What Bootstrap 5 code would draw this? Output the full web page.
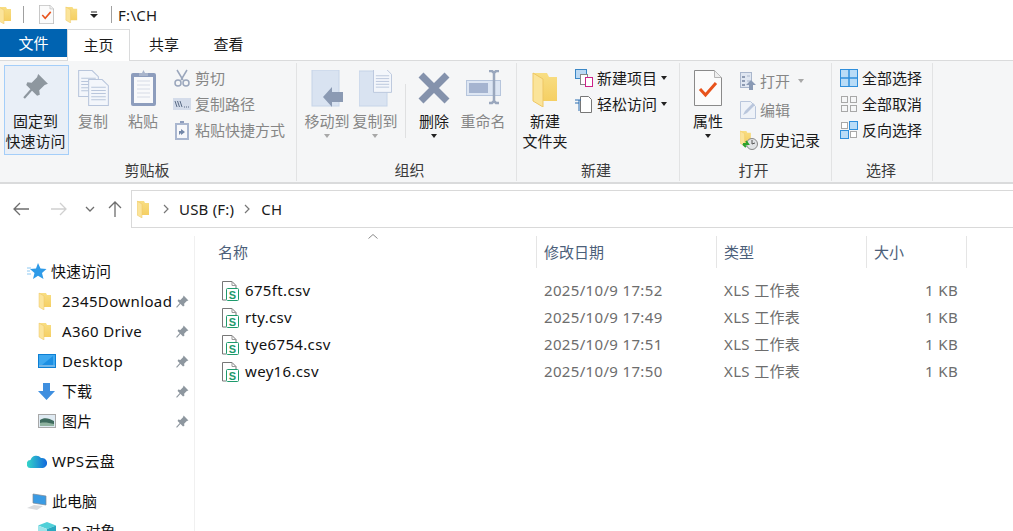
<!doctype html>
<html lang="zh"><head><meta charset="utf-8"><title>CH</title>
<link href="https://cdn.jsdelivr.net/npm/bootstrap@5.3.0/dist/css/bootstrap.min.css" rel="stylesheet">
<style>
html,body{height:531px;overflow:hidden;background:#fff}
body{font-family:"Noto Sans","Noto Sans CJK SC",sans-serif;font-size:15px;line-height:20px;color:#1a1a1a}
svg{display:block;flex:none}
.sk-title{height:29px}
.sk-sep{width:1px;height:17px;background:#a0a0a0}
.sk-path{letter-spacing:.3px;margin-left:-1px}
.sk-tabs{height:32px;border-bottom:1px solid #dadbdc}
.sk-tab{height:32px;width:65px;text-align:center;line-height:31px}
.sk-file{width:67px;height:28px;line-height:28px;background:#0063b1;color:#fff}
.sk-home{width:63px;border:1px solid #dadbdc;border-bottom:0;background:#fff;margin-bottom:-1px}
.sk-ribbon{height:123px;background:#f5f6f7;border-bottom:2px solid #dadbdc}
.sk-group{height:118px;border-right:1px solid #e2e3e4;margin-top:2px}
.sk-gbody{height:95px;margin-top:2px}
.sk-glabel{height:20px;text-align:center;color:#3b3b3b}
.sk-big{width:48px;padding-top:5px;text-align:center;white-space:nowrap}
.sk-big svg{margin:0 auto 5px}
.sk-big svg[height="37"]{margin-bottom:4px}
.sk-off{color:#868686}
.sk-pin{width:65px;height:90px;background:#e9eff7;border:1px solid #a4cef9;padding:4px 2px 0 0}
.sk-small{height:26px;white-space:nowrap}
.sk-tall{height:29.5px}
.sk-small svg{margin-right:4px}
.sk-vsep{width:1px;height:54px;background:#dfe0e1;margin:19px 4px 0 6px}
.sk-caret{width:0;height:0;border:3.5px solid transparent;border-top:4px solid #222;border-bottom:0}
.sk-caret-off{border-top-color:#a8a8a8}
.sk-addr{height:44px;padding-top:6px}
.sk-box{height:38px;flex:1;border:1px solid #d9d9d9;border-right:0;padding-left:5px}
.sk-crumb{letter-spacing:.2px}
.sk-nav{width:195px;height:303px;overflow:hidden;border-right:1px solid #f0f0f0;margin-top:8px;padding-top:20px}
.sk-tree{height:30px;white-space:nowrap;color:#111}
.sk-lv1{padding-left:26px}
.sk-lv2{padding-left:38px}
.sk-name{flex:1}
.sk-latin{letter-spacing:.38px}
.sk-gap{margin-top:10px}
.sk-np{width:13px;height:13px;margin-right:5px;color:#8e979f}
.sk-main{flex:1;padding:8px 0 0 15px}
.sk-cols{display:grid;grid-template-columns:327px 180px 150px 100px}
.sk-hd{height:32px;color:#4c607a;position:relative}
.sk-hd>div{padding-left:7px;border-right:1px solid #e5e5e5;line-height:32px}
.sk-hd>div:first-of-type{padding-left:8px}
.sk-sort{position:absolute;left:158px;top:-2px}
.sk-rows{margin-top:9px}
.sk-row{height:27px;line-height:27px;color:#6d6d6d;letter-spacing:.34px}
.sk-row>div{padding-left:7px;white-space:nowrap}
.sk-fn{color:#111;display:flex;align-items:center;padding-left:11px!important}
.sk-fn svg{margin-right:6px}
.sk-row>.sk-kb{text-align:right;padding-right:9px}
</style></head><body>
<svg width="0" height="0" style="position:absolute"><defs>
<linearGradient id="fg" x1="0" x2="0" y1="0" y2="1"><stop offset="0" stop-color="#f8de84"/><stop offset="1" stop-color="#f5cf63"/></linearGradient>
<symbol id="fold" viewBox="0 0 12 18"><path d="M0 1h7l1 2h4v12H3z" fill="url(#fg)"/><path d="M0 1l5 3v14l-5-3z" fill="#fbe49a" stroke="#eec765" stroke-width=".5"/></symbol>
<symbol id="pin" viewBox="0 0 24 24"><path d="M1 23l8-9" stroke="currentColor" stroke-width="2"/><path d="M14 1l9 9-3 1-5 5 .5 4-2.500 1L3 11l1-2.500 4 .5 5-5z" fill="currentColor"/></symbol>
<symbol id="doc" viewBox="0 0 28 36"><path d="M.5.500h20l7 7v28H.5z" fill="#fbfbfb" stroke="#8a8a8a"/><path d="M20.500.5v7h7" fill="#eee" stroke="#b5b5b5"/><path d="M6 19l5.500 6L22 13" fill="none" stroke="#e8531c" stroke-width="3"/></symbol>
<symbol id="csv" viewBox="0 0 18 20"><path d="M5 19H1.500V.5H11l4 4V7" fill="#fff" stroke="#777"/><path d="M11 .5v4h4" fill="none" stroke="#999"/><rect x="5.500" y="7.500" width="12" height="12" rx="1" fill="#fff" stroke="#1d9a6c"/><text x="11.500" y="17.500" text-anchor="middle" font-size="11" font-weight="700" font-family="Liberation Sans" fill="#1d9a6c">S</text></symbol>
<symbol id="docln" viewBox="0 0 20 26"><path d="M.5.500h13l6 6v19H.5z" fill="#f3f6fb" stroke="#b9c6dc"/><path d="M3 8h14M3 11h14M3 14h14M3 17h14M3 20h14" stroke="#b9c6dc"/></symbol>
</defs></svg>

<header class="sk-title d-flex align-items-center">
 <svg width="14" height="18" style="margin-left:-2px"><use href="#fold"/></svg>
 <div class="sk-sep" style="margin:0 15px 0 11px"></div>
 <svg width="15" height="19"><use href="#doc"/></svg>
 <svg width="13" height="17" style="margin-left:11px"><use href="#fold"/></svg>
 <svg width="8" height="8" style="margin-left:12px"><path d="M1 1h6" stroke="#222"/><path d="M0 3h8L4 7z" fill="#222"/></svg>
 <div class="sk-sep" style="margin:0 7px 0 13px"></div>
 <span class="sk-path">F:\CH</span>
</header>

<nav class="sk-tabs d-flex align-items-start">
 <div class="sk-tab sk-file">文件</div><div class="sk-tab sk-home">主页</div><div class="sk-tab" style="width:68px">共享</div><div class="sk-tab" style="width:61px">查看</div>
</nav>

<section class="sk-ribbon d-flex">
 <div class="sk-group" style="width:297px;padding:0 6px 0 4px">
  <div class="sk-gbody d-flex">
   <div class="sk-big sk-pin"><svg width="28" height="36" viewBox="0 0 28 36" style="margin-bottom:5px;color:#8e979f"><use href="#pin" x="1" y="3" width="26" height="26"/></svg>固定到<br>快速访问</div>
   <div class="sk-big sk-off"><svg width="31" height="36"><use href="#docln" x="0" y="0" width="21" height="27"/><use href="#docln" x="10" y="9" width="21" height="27"/></svg>复制</div>
   <div class="sk-big sk-off" style="width:52px"><svg width="27" height="37" viewBox="0 0 27 37"><rect x="1" y="3" width="25" height="33" rx="2" fill="#8d9dbd"/><rect x="4" y="7" width="19" height="26" fill="#f8f9fb"/><path d="M7 11h13M7 15h13M7 19h13M7 23h13M7 27h13" stroke="#d6dbe6"/><path d="M9 6V3h3l1.500-3L15 3h3v3z" fill="#a9b5cc"/></svg>粘贴</div>
   <div class="sk-off" style="margin-left:4px">
    <div class="sk-small d-flex align-items-center"><svg width="18" height="18" viewBox="0 0 18 18"><g fill="none" stroke="#9aa6bc" stroke-width="1.500"><path d="M4 1l6 10M14 1L8 11"/><circle cx="5" cy="14" r="3"/><circle cx="13" cy="14" r="3"/></g></svg>剪切</div>
    <div class="sk-small d-flex align-items-center"><svg width="18" height="12" viewBox="0 0 18 12"><rect width="18" height="12" fill="#d4dcea"/><path d="M2 3l2 6M4.500 3l2 6M7 3l2 6" stroke="#5a6b85"/><path d="M11 9h1M13 9h1M15 9h1" stroke="#5a6b85"/></svg>复制路径</div>
    <div class="sk-small d-flex align-items-center"><svg width="18" height="20" viewBox="0 0 18 20"><rect x="2" y="3" width="14" height="17" fill="#a9b6cf"/><rect x="4" y="5" width="10" height="13" fill="#f7f8fb"/><path d="M7 3V1h4v2z" fill="#8d9dbd"/><path d="M6 15V11h2V9l4 3-4 3v-2z" fill="#7387a8"/></svg>粘贴快捷方式</div>
   </div>
  </div>
  <div class="sk-glabel">剪贴板</div>
 </div>

 <div class="sk-group" style="width:220px;padding-left:6px">
  <div class="sk-gbody d-flex">
   <div class="sk-big sk-off"><svg width="33" height="37" viewBox="0 0 33 37"><rect x="1" width="27" height="36" fill="#d9e3f1" stroke="#c6d4e8"/><path d="M12 27l9-10v5h11v10H21v5z" fill="#8b9ab3"/></svg>移动到<div class="sk-caret sk-caret-off mx-auto" style="margin-top:3px"></div></div>
   <div class="sk-big sk-off"><svg width="33" height="37" viewBox="0 0 33 37"><rect x="0" y="1" width="28" height="35" fill="#d9e3f1" stroke="#c6d4e8"/><use href="#docln" x="14" y="-2" width="19" height="25"/></svg>复制到<div class="sk-caret sk-caret-off mx-auto" style="margin-top:3px"></div></div>
   <div class="sk-vsep"></div>
   <div class="sk-big"><svg width="32" height="37" viewBox="0 0 32 37"><path d="M3 5l26 26M29 5L3 31" stroke="#8492ac" stroke-width="7"/></svg>删除<div class="sk-caret mx-auto" style="margin-top:3px"></div></div>
   <div class="sk-big sk-off" style="width:50px"><svg width="36" height="37" viewBox="0 0 36 37"><rect x="1.500" y="10.500" width="34" height="15" fill="#dde6f3" stroke="#b6c5dc"/><rect x="4" y="13" width="19" height="10" fill="#a5b4d0"/><path d="M24 1h3l2 2 2-2h3M29 3v28M24 33h3l2-2 2 2h3" fill="none" stroke="#9aa7bd" stroke-width="2.500"/></svg>重命名</div>
  </div>
  <div class="sk-glabel">组织</div>
 </div>

 <div class="sk-group" style="width:163px;padding:0 10px 0 6px">
  <div class="sk-gbody d-flex">
   <div class="sk-big" style="width:46px;margin-left:-1px"><svg width="26" height="37" viewBox="0 -2 26 37"><use href="#fold" width="26" height="36" y="-1"/></svg>新建<br>文件夹</div>
   <div style="margin-left:7px">
    <div class="sk-small d-flex align-items-center"><svg width="18" height="18" viewBox="0 0 18 18"><rect x=".5" y=".5" width="11" height="9" fill="#bcd9f3" stroke="#3b87c6"/><rect x="5.500" y="5.500" width="7" height="10" fill="#fff" stroke="#888"/><rect x="10.500" y="8.500" width="7" height="9" fill="#fff" stroke="#c28"/></svg>新建项目<div class="sk-caret ms-1"></div></div>
    <div class="sk-small d-flex align-items-center"><svg width="18" height="18" viewBox="0 0 18 18"><path d="M5.500 1.500h8l3 3v13h-11z" fill="#fff" stroke="#777"/><path d="M0 5h6M0 8h4" stroke="#2b6fb3" stroke-width="1.200"/><path d="M4 5v11" stroke="#2b6fb3"/></svg>轻松访问<div class="sk-caret ms-1"></div></div>
   </div>
  </div>
  <div class="sk-glabel">新建</div>
 </div>

 <div class="sk-group" style="width:152px;padding:0 10px 0 6px">
  <div class="sk-gbody d-flex">
   <div class="sk-big" style="width:44px"><svg width="28" height="36"><use href="#doc"/></svg>属性<div class="sk-caret mx-auto" style="margin-top:3px"></div></div>
   <div style="margin-left:10px;padding-top:1px">
    <div class="sk-small sk-tall d-flex align-items-center sk-off"><svg width="16" height="18" viewBox="0 0 16 18"><rect x=".5" y=".5" width="11" height="15" fill="#dfe6f1" stroke="#a9b6cc"/><path d="M2 4h3v2H2zM2 8h3v2H2zM2 12h3v2H2z" fill="#8e9bb3"/><path d="M7 4h3M7 9h3" stroke="#a9b6cc"/><path d="M11 8l5 5h-3v5h-4v-5H6z" fill="#8a9ab5"/></svg><span>打开</span><div class="sk-caret sk-caret-off ms-2"></div></div>
    <div class="sk-small sk-tall d-flex align-items-center sk-off"><svg width="16" height="18" viewBox="0 0 16 18"><path d="M.5.500h10l5 5v12H.5z" fill="#eef2f8" stroke="#b9c6dc"/><path d="M3 14l2-4 8-8 2 2-8 8z" fill="#b9c6dc"/></svg>编辑</div>
    <div class="sk-small sk-tall d-flex align-items-center"><svg width="18" height="20" viewBox="0 0 18 20" style="margin-right:2px"><use href="#fold" width="11" height="16"/><circle cx="12" cy="14" r="5.500" fill="#e1e3e5" stroke="#888"/><path d="M12 10v4l3-1" stroke="#555" fill="none"/><path d="M3 14h5l-2-3M3 14l3 3" stroke="#2da12d" stroke-width="2" fill="none"/></svg>历史记录</div>
   </div>
  </div>
  <div class="sk-glabel">打开</div>
 </div>

 <div class="sk-group" style="width:101px;padding:0 10px 0 8px">
  <div class="sk-gbody">
    <div class="sk-small d-flex align-items-center"><svg width="18" height="18" viewBox="0 0 18 18"><rect x=".5" y=".5" width="17" height="17" fill="#b9dcf7" stroke="#2f8fdc"/><path d="M9 0v18M0 9h18" stroke="#2f8fdc" stroke-width="1.500"/></svg>全部选择</div>
    <div class="sk-small d-flex align-items-center"><svg width="18" height="18" viewBox="0 0 18 18" fill="none" stroke="#a8a8a8"><rect x="1.500" y="1.500" width="6" height="6"/><rect x="10.500" y="1.500" width="6" height="6"/><rect x="1.500" y="10.500" width="6" height="6"/><rect x="10.500" y="10.500" width="6" height="6"/></svg>全部取消</div>
    <div class="sk-small d-flex align-items-center"><svg width="18" height="18" viewBox="0 0 18 18"><g fill="#fff" stroke="#a8a8a8"><rect x="1.500" y="1.500" width="6" height="6"/><rect x="10.500" y="10.500" width="6" height="6"/></g><g fill="#b9dcf7" stroke="#2f8fdc"><rect x="9.500" y=".5" width="8" height="8"/><rect x=".5" y="9.500" width="8" height="8"/></g></svg>反向选择</div>
  </div>
  <div class="sk-glabel">选择</div>
 </div>
</section>

<div class="sk-addr d-flex align-items-center">
 <svg width="16" height="14" style="margin-left:13px" viewBox="0 0 16 14" fill="none" stroke="#6e6e6e" stroke-width="1.300"><path d="M16 7H1M7 1L1 7l6 6"/></svg>
 <svg width="16" height="14" style="margin-left:22px" viewBox="0 0 16 14" fill="none" stroke="#d0d0d0" stroke-width="1.300"><path d="M0 7h15M9 1l6 6-6 6"/></svg>
 <svg width="10" height="7" style="margin-left:18px" viewBox="0 0 10 7" fill="none" stroke="#6e6e6e" stroke-width="1.300"><path d="M1 1l4 4 4-4"/></svg>
 <svg width="14" height="16" style="margin-left:13px" viewBox="0 0 14 16" fill="none" stroke="#6e6e6e" stroke-width="1.300"><path d="M7 16V1M1 7l6-6 6 6"/></svg>
 <div class="sk-box d-flex align-items-center" style="margin-left:9px">
  <svg width="12" height="18"><use href="#fold"/></svg>
  <svg width="6" height="10" style="margin:0 10px 0 14px" viewBox="0 0 6 10" fill="none" stroke="#777" stroke-width="1.200"><path d="M1 1l4 4-4 4"/></svg>
  <span class="sk-crumb">USB (F:)</span>
  <svg width="6" height="10" style="margin:0 11px 0 10px" viewBox="0 0 6 10" fill="none" stroke="#777" stroke-width="1.200"><path d="M1 1l4 4-4 4"/></svg>
  <span class="sk-crumb">CH</span>
 </div>
</div>

<div class="d-flex">
 <aside class="sk-nav">
  <div class="sk-tree sk-lv1 d-flex align-items-center"><svg width="20" height="16" class="me-1" style="margin-left:1px" viewBox="0 0 20 16"><path d="M11 0l2.500 5.500 6 .5-4.500 4 1.500 6-5.500-3.200L6 16l1.500-6L3 6l6-.5z" fill="#2f9be8"/><path d="M0 5h4M0 8h3M0 11h4" stroke="#8cc8f2"/></svg>快速访问</div>
  <div class="sk-tree sk-lv2 d-flex align-items-center"><svg width="14" height="18" style="margin-right:10px"><use href="#fold"/></svg><span class="sk-name sk-latin">2345Download</span><svg class="sk-np"><use href="#pin"/></svg></div>
  <div class="sk-tree sk-lv2 d-flex align-items-center"><svg width="14" height="18" style="margin-right:10px"><use href="#fold"/></svg><span class="sk-name sk-latin">A360 Drive</span><svg class="sk-np"><use href="#pin"/></svg></div>
  <div class="sk-tree sk-lv2 d-flex align-items-center"><svg width="18" height="14" style="margin-right:6px" viewBox="0 0 18 14"><rect width="18" height="14" fill="#0d7fd4"/><path d="M1 1h16v10H1z" fill="#3fa9f0"/><path d="M4 11L15 2v9z" fill="#1d8fe3"/><path d="M1 12h16" stroke="#d8eefc"/></svg><span class="sk-name sk-latin">Desktop</span><svg class="sk-np"><use href="#pin"/></svg></div>
  <div class="sk-tree sk-lv2 d-flex align-items-center"><svg width="17" height="17" style="margin-right:7px" viewBox="0 0 17 17"><path d="M5 0h7v8h5l-8.500 9L0 8h5z" fill="#3f8fdf"/></svg><span class="sk-name">下载</span><svg class="sk-np"><use href="#pin"/></svg></div>
  <div class="sk-tree sk-lv2 d-flex align-items-center"><svg width="18" height="14" style="margin-right:6px" viewBox="0 0 18 14"><rect x=".5" y=".5" width="17" height="13" fill="#dfeaf2" stroke="#a8a8a8"/><path d="M2 6c4-3 9-2 14 1v5H2z" fill="#3e6b5e"/><path d="M2 9c5-1 9 0 14 1v2H2z" fill="#8fb3a0"/></svg><span class="sk-name">图片</span><svg class="sk-np"><use href="#pin"/></svg></div>
  <div class="sk-tree sk-lv1 sk-gap d-flex align-items-center"><svg width="20" height="14" style="margin-right:5px;margin-left:1px" viewBox="0 0 20 14"><defs><linearGradient id="wp" x1="0" x2="1"><stop offset="0" stop-color="#35d6c8"/><stop offset="1" stop-color="#1268dc"/></linearGradient></defs><path d="M4 14a4 4 0 0 1-.5-8A6 6 0 0 1 14 4a5 5 0 0 1 2 10z" fill="url(#wp)"/></svg><span class="sk-latin">WPS云盘</span></div>
  <div class="sk-tree sk-lv1 sk-gap d-flex align-items-center"><svg width="20" height="17" style="margin-right:5px;margin-left:1px" viewBox="0 0 20 17"><path d="M6 1l13 2v9L6 10z" fill="#3a9be4" stroke="#7e8a96" stroke-width=".7"/><path d="M0 15l7-3 9 1-6 4z" fill="#d9dbde"/></svg>此电脑</div>
  <div class="sk-tree sk-lv2 d-flex align-items-center"><svg width="18" height="18" style="margin-right:6px" viewBox="0 0 18 18"><path d="M9 0l9 3.500-9 3.500L0 3.500z" fill="#4fd0d8"/><path d="M0 3.500L9 7v11L0 14z" fill="#9ee4ea"/><path d="M18 3.500L9 7v11l9-4z" fill="#2aa8c0"/></svg>3D 对象</div>
 </aside>

 <main class="sk-main">
  <div class="sk-cols sk-hd"><svg class="sk-sort" width="10" height="5" viewBox="0 0 10 5" fill="none" stroke="#8a8a8a"><path d="M.5 4.500L5 .5l4.500 4"/></svg>
   <div>名称</div><div>修改日期</div><div>类型</div><div>大小</div>
  </div>
  <div class="sk-rows">
   <div class="sk-cols sk-row"><div class="sk-fn"><svg width="18" height="20"><use href="#csv"/></svg>675ft.csv</div><div>2025/10/9 17:52</div><div>XLS 工作表</div><div class="sk-kb">1 KB</div></div>
   <div class="sk-cols sk-row"><div class="sk-fn"><svg width="18" height="20"><use href="#csv"/></svg>rty.csv</div><div>2025/10/9 17:49</div><div>XLS 工作表</div><div class="sk-kb">1 KB</div></div>
   <div class="sk-cols sk-row"><div class="sk-fn"><svg width="18" height="20"><use href="#csv"/></svg>tye6754.csv</div><div>2025/10/9 17:51</div><div>XLS 工作表</div><div class="sk-kb">1 KB</div></div>
   <div class="sk-cols sk-row"><div class="sk-fn"><svg width="18" height="20"><use href="#csv"/></svg>wey16.csv</div><div>2025/10/9 17:50</div><div>XLS 工作表</div><div class="sk-kb">1 KB</div></div>
  </div>
 </main>
</div>
<script src="https://cdn.jsdelivr.net/npm/bootstrap@5.3.0/dist/js/bootstrap.bundle.min.js"></script>
</body></html>
